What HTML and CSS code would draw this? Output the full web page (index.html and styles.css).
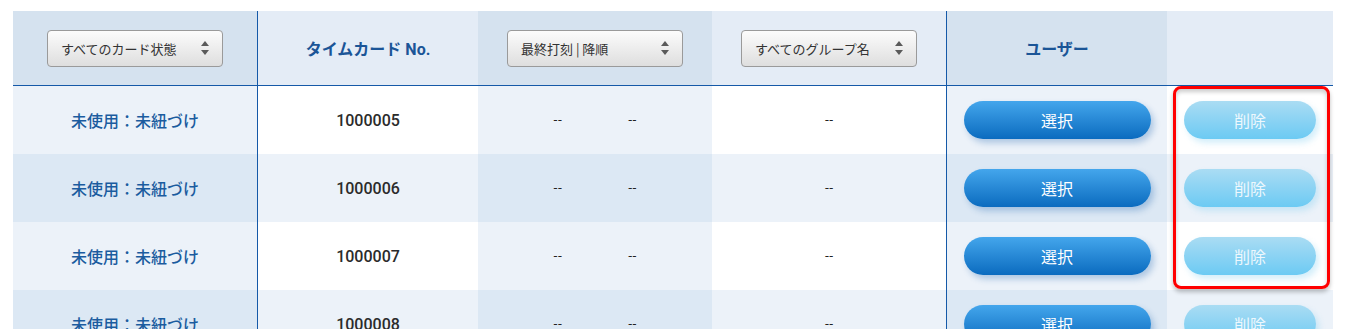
FILE: index.html
```html
<!DOCTYPE html>
<html lang="ja">
<head>
    <meta charset="UTF-8">
    <meta name="viewport" content="width=device-width, initial-scale=1.0">
    <title>タイムカード一覧</title>
    <link rel="stylesheet" href="styles.css">
</head>
<body>
    <div class="page">
        <div class="card-table">
            <div class="row head">
                <div class="cell c1 sep">
                    <div class="select"><span>すべてのカード状態</span><i class="arrows"></i></div>
                </div>
                <div class="cell c2"><span class="head-label">タイムカード No.</span></div>
                <div class="cell c3">
                    <div class="select"><span>最終打刻 | 降順</span><i class="arrows"></i></div>
                </div>
                <div class="cell c4 sep">
                    <div class="select"><span>すべてのグループ名</span><i class="arrows"></i></div>
                </div>
                <div class="cell c5"><span class="head-label">ユーザー</span></div>
                <div class="cell c6"></div>
            </div>

            <div class="row odd">
                <div class="cell c1 sep status">未使用：未紐づけ</div>
                <div class="cell c2 number">1000005</div>
                <div class="cell c3 punch"><span>--</span><span>--</span></div>
                <div class="cell c4 sep dash">--</div>
                <div class="cell c5"><button class="btn select-btn">選択</button></div>
                <div class="cell c6"><button class="btn delete-btn">削除</button></div>
            </div>
            <div class="row even">
                <div class="cell c1 sep status">未使用：未紐づけ</div>
                <div class="cell c2 number">1000006</div>
                <div class="cell c3 punch"><span>--</span><span>--</span></div>
                <div class="cell c4 sep dash">--</div>
                <div class="cell c5"><button class="btn select-btn">選択</button></div>
                <div class="cell c6"><button class="btn delete-btn">削除</button></div>
            </div>
            <div class="row odd">
                <div class="cell c1 sep status">未使用：未紐づけ</div>
                <div class="cell c2 number">1000007</div>
                <div class="cell c3 punch"><span>--</span><span>--</span></div>
                <div class="cell c4 sep dash">--</div>
                <div class="cell c5"><button class="btn select-btn">選択</button></div>
                <div class="cell c6"><button class="btn delete-btn">削除</button></div>
            </div>
            <div class="row even">
                <div class="cell c1 sep status">未使用：未紐づけ</div>
                <div class="cell c2 number">1000008</div>
                <div class="cell c3 punch"><span>--</span><span>--</span></div>
                <div class="cell c4 sep dash">--</div>
                <div class="cell c5"><button class="btn select-btn">選択</button></div>
                <div class="cell c6"><button class="btn delete-btn">削除</button></div>
            </div>

            <!-- 注目枠 -->
            <div class="highlight"></div>
        </div>
    </div>
</body>
</html>
```

FILE: styles.css
```css
body {
    margin: 0;
    background: #ffffff;
    font-family: Roboto, "Noto Sans CJK JP", sans-serif;
    overflow: hidden;
}
.page {
    padding: 11px 12px 0 13px;
}
.card-table {
    position: relative;
    width: 1320px;
}
.row {
    display: grid;
    grid-template-columns: 245px 220px 234px 235px 220px 166px;
    height: 68px;
}
.row.head {
    height: 74px;
    border-bottom: 1px solid #1559a8;
}
.cell {
    display: flex;
    align-items: center;
    justify-content: center;
    box-sizing: border-box;
}
.cell.sep {
    border-right: 1px solid #1559a8;
}

/* 列・行の縞模様 */
.head .c1, .head .c3, .head .c5 { background: #d5e2ef; }
.head .c2, .head .c4, .head .c6 { background: #e4ecf6; }
.odd .c1, .odd .c3, .odd .c5 { background: #ecf2f9; }
.odd .c2, .odd .c4, .odd .c6 { background: #ffffff; }
.even .c1, .even .c3, .even .c5 { background: #dce8f4; }
.even .c2, .even .c4, .even .c6 { background: #ecf2f9; }

.head-label {
    font-family: Roboto, "Noto Sans CJK JP", sans-serif;
    font-weight: bold;
    font-size: 16px;
    color: #1b5597;
}
.select {
    width: 176px;
    height: 37px;
    box-sizing: border-box;
    border: 1px solid #9a9a9a;
    border-radius: 4px;
    background: linear-gradient(#fcfcfc, #dedede);
    display: flex;
    align-items: center;
    justify-content: space-between;
    padding: 0 13px 0 13px;
    font-family: "Noto Sans CJK JP", sans-serif;
    font-size: 13px;
    color: #333;
}
.arrows {
    position: relative;
    width: 8px;
    height: 18px;
}
.arrows::before, .arrows::after {
    content: "";
    position: absolute;
    left: 0;
    border-left: 4px solid transparent;
    border-right: 4px solid transparent;
}
.arrows::before {
    top: 2px;
    border-bottom: 5px solid #5a5a5a;
}
.arrows::after {
    bottom: 2px;
    border-top: 5px solid #5a5a5a;
}

.status {
    font-family: "Noto Sans CJK JP", sans-serif;
    font-size: 16px;
    font-weight: 500;
    color: #1b5c9f;
}
.number {
    font-family: Roboto, sans-serif;
    font-size: 16px;
    font-weight: 500;
    color: #2b2b2b;
}
.punch {
    gap: 66px;
    font-family: "DejaVu Sans", sans-serif;
    font-size: 12px;
    color: #222;
}
.dash {
    font-family: "DejaVu Sans", sans-serif;
    font-size: 12px;
    color: #222;
}

.btn {
    height: 38px;
    border: none;
    border-radius: 19px;
    font-family: "Noto Sans CJK JP", sans-serif;
    font-size: 16px;
    color: #fff;
    cursor: pointer;
}
.select-btn {
    width: 187px;
    background: linear-gradient(#44a6ec, #0b6bbf);
    box-shadow: 3px 4px 6px rgba(30, 100, 175, 0.3);
}
.delete-btn {
    width: 132px;
    background: linear-gradient(#aadcf3, #6ccaf3);
    color: #eef8fd;
    box-shadow: 3px 4px 6px rgba(110, 200, 240, 0.3);
}

.highlight {
    position: absolute;
    left: 1160px;
    top: 75px;
    width: 157px;
    height: 203px;
    box-sizing: border-box;
    border: 3px solid #ff0000;
    border-radius: 8px;
    box-shadow: 0 3px 4px rgba(0, 0, 0, 0.25), inset 0 3px 4px rgba(0, 0, 0, 0.2);
}
```
